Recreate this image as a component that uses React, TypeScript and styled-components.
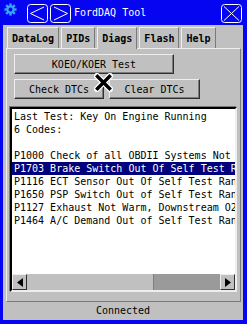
import React from "react";
import styled, { createGlobalStyle } from "styled-components";

const GlobalStyle = createGlobalStyle`
html, body {
    margin: 0;
    padding: 0;
    background: #ffffff;
}
body {
    font-family: "DejaVu Sans Mono", "Liberation Mono", monospace;
}
`;

const BG = "#c0c0c0";
const LIGHT = "#eeeeee";
const DARK = "#7a7a7a";
const TITLE_BLUE = "#0505f2";

const codes: string[] = [
    "Last Test: Key On Engine Running",
    "6 Codes:",
    "",
    "P1000 Check of all OBDII Systems Not Complete",
    "P1703 Brake Switch Out Of Self Test Range",
    "P1116 ECT Sensor Out Of Self Test Range",
    "P1650 PSP Switch Out of Self Test Range",
    "P1127 Exhaust Not Warm, Downstream O2 Sensor Not Tested",
    "P1464 A/C Demand Out of Self Test Range",
];

const tabs = ["DataLog", "PIDs", "Diags", "Flash", "Help"];

const Gear = () => (
    <svg width="13" height="13" viewBox="0 0 13 13">
        <g stroke="#3aa2ff" strokeWidth="2.4" strokeLinecap="butt">
            {[0, 45, 90, 135].map((a) => (
                <line key={a} x1="6.5" y1="0.4" x2="6.5" y2="12.6" transform={`rotate(${a} 6.5 6.5)`} />
            ))}
        </g>
        <circle cx="6.5" cy="6.5" r="4.2" fill="#3aa2ff" />
        <circle cx="6.5" cy="6.5" r="1.9" fill={TITLE_BLUE} />
    </svg>
);

const Chevron = ({ dir }: { dir: "left" | "right" }) => (
    <svg width="21" height="19" viewBox="0 0 21 19">
        <rect x="0.5" y="0.5" width="20" height="18" rx="3" fill="none" stroke="#ffffff" strokeWidth="1" />
        {dir === "left" ? (
            <polyline points="17,3 3.5,9.5 17,16" fill="none" stroke="#ffffff" strokeWidth="1" />
        ) : (
            <polyline points="4,3 17.5,9.5 4,16" fill="none" stroke="#ffffff" strokeWidth="1" />
        )}
    </svg>
);

const CloseIcon = () => (
    <svg width="21" height="19" viewBox="0 0 21 19">
        <rect x="0.5" y="0.5" width="20" height="18" rx="3" fill="none" stroke="#ffffff" strokeWidth="1" />
        <line x1="3" y1="2.5" x2="18" y2="16.5" stroke="#ffffff" strokeWidth="1" />
        <line x1="18" y1="2.5" x2="3" y2="16.5" stroke="#ffffff" strokeWidth="1" />
    </svg>
);

const Triangle = ({ dir }: { dir: "left" | "right" }) => (
    <svg width="6" height="9" viewBox="0 0 6 9">
        {dir === "left" ? <polygon points="6,0 0,4.5 6,9" fill="#000" /> : <polygon points="0,0 6,4.5 0,9" fill="#000" />}
    </svg>
);

const XCursor = () => (
    <svg width="19" height="19" viewBox="0 0 19 19">
        <g strokeLinecap="square">
            <line x1="3" y1="3" x2="16" y2="16" stroke="#ffffff" strokeWidth="6" />
            <line x1="16" y1="3" x2="3" y2="16" stroke="#ffffff" strokeWidth="6" />
            <line x1="3.5" y1="3.5" x2="15.5" y2="15.5" stroke="#000000" strokeWidth="3.4" />
            <line x1="15.5" y1="3.5" x2="3.5" y2="15.5" stroke="#000000" strokeWidth="3.4" />
        </g>
    </svg>
);

export default function App(): JSX.Element {
    const visibleChars = 37;
    const longest = Math.max(...codes.map((c) => c.length));
    const thumbPct = Math.min(100, (visibleChars / longest) * 100 * 0.98);

    return (
        <>
            <GlobalStyle />
            <Window>
                <TitleBar>
                    <GearSlot>
                        <Gear />
                    </GearSlot>
                    <TitleButton>
                        <Chevron dir="left" />
                    </TitleButton>
                    <TitleButton>
                        <Chevron dir="right" />
                    </TitleButton>
                    <TitleText>FordDAQ Tool</TitleText>
                    <CloseButton>
                        <CloseIcon />
                    </CloseButton>
                </TitleBar>
                <Body>
                    <TabRow>
                        {tabs.map((t) => (
                            <Tab key={t} $active={t === "Diags"}>
                                {t}
                            </Tab>
                        ))}
                    </TabRow>
                    <Panel>
                        <Buttons>
                            <RaisedButton $width={160}>KOEO/KOER Test</RaisedButton>
                            <ButtonRow>
                                <RaisedButton $width={90}>Check DTCs</RaisedButton>
                                <RaisedButton $width={91}>Clear DTCs</RaisedButton>
                            </ButtonRow>
                        </Buttons>
                        <ListBox>
                            <Lines>
                                {codes.map((c, i) => (
                                    <Line key={i} $selected={i === 4}>
                                        {c}
                                    </Line>
                                ))}
                            </Lines>
                            <HScroll>
                                <ArrowButton>
                                    <Triangle dir="left" />
                                </ArrowButton>
                                <Trough>
                                    <Thumb style={{ width: `${thumbPct}%` }} />
                                </Trough>
                                <ArrowButton>
                                    <Triangle dir="right" />
                                </ArrowButton>
                            </HScroll>
                        </ListBox>
                    </Panel>
                    <Status>Connected</Status>
                </Body>
                <Cursor>
                    <XCursor />
                </Cursor>
            </Window>
        </>
    );
}

const Window = styled.div`
position: relative;
width: 247px;
height: 324px;
box-sizing: border-box;
padding: 0 4px 4px 3px;
background: ${TITLE_BLUE};
display: flex;
flex-direction: column;
overflow: hidden;
`;

const TitleBar = styled.div`
height: 25px;
display: flex;
align-items: flex-start;
color: #ffffff;
`;

const GearSlot = styled.div`
margin: 3px 8px 0 1px;
width: 13px;
height: 13px;
display: flex;
`;

const TitleButton = styled.div`
margin-top: 4px;
margin-left: 2px;
width: 21px;
height: 19px;
display: flex;
`;

const TitleText = styled.div`
margin: 6px 0 0 3px;
font-size: 10px;
line-height: 13px;
flex: 1;
white-space: nowrap;
`;

const CloseButton = styled.div`
margin: 4px 1px 0 0;
width: 21px;
height: 19px;
display: flex;
`;

const Body = styled.div`
flex: 1;
background: ${BG};
display: flex;
flex-direction: column;
`;

const TabRow = styled.div`
height: 21px;
margin-top: 2px;
padding-left: 4px;
display: flex;
align-items: flex-end;
gap: 2px;
position: relative;
z-index: 1;
`;

const Tab = styled.div<{ $active?: boolean }>`
height: ${(p) => (p.$active ? "22px" : "21px")};
margin-bottom: ${(p) => (p.$active ? "-1px" : "0")};
box-sizing: border-box;
padding: 4px 4px 0 4px;
border-top: 1px solid ${LIGHT};
border-left: 1px solid ${LIGHT};
border-right: 1px solid ${DARK};
background: ${BG};
font-weight: bold;
font-size: 10px;
line-height: 13px;
color: #000;
white-space: nowrap;
`;

const Panel = styled.div`
margin: 0 2px 0 3px;
height: 254px;
box-sizing: border-box;
border: 1px solid;
border-color: ${LIGHT} ${DARK} ${DARK} ${LIGHT};
padding: 5px 3px 0 3px;
display: flex;
flex-direction: column;
`;

const Buttons = styled.div`
padding-left: 4px;
display: flex;
flex-direction: column;
gap: 5px;
`;

const ButtonRow = styled.div`
display: flex;
gap: 5px;
`;

const RaisedButton = styled.div<{ $width: number }>`
width: ${(p) => p.$width}px;
height: 20px;
box-sizing: border-box;
border: 1px solid;
border-color: ${LIGHT} #303030 #303030 ${LIGHT};
box-shadow: inset -1px -1px 0 ${DARK};
display: flex;
align-items: center;
justify-content: center;
font-size: 10px;
color: #000;
white-space: nowrap;
`;

const ListBox = styled.div`
margin-top: 8px;
width: 227px;
height: 185px;
box-sizing: border-box;
border: 2px solid;
border-color: #000000 ${LIGHT} ${LIGHT} #000000;
box-shadow: -1px -1px 0 ${DARK};
display: flex;
flex-direction: column;
background: #ffffff;
`;

const Lines = styled.div`
flex: 1;
overflow: hidden;
padding-top: 1px;
`;

const Line = styled.div<{ $selected?: boolean }>`
height: 13px;
line-height: 13px;
padding-left: 2px;
font-size: 10px;
white-space: pre;
color: ${(p) => (p.$selected ? "#ffffff" : "#000000")};
background: ${(p) => (p.$selected ? "#00007c" : "transparent")};
`;

const HScroll = styled.div`
height: 16px;
display: flex;
background: #9a9a9a;
`;

const ArrowButton = styled.div`
width: 15px;
height: 16px;
box-sizing: border-box;
border: 1px solid;
border-color: ${LIGHT} #303030 #303030 ${LIGHT};
background: ${BG};
display: flex;
align-items: center;
justify-content: center;
`;

const Trough = styled.div`
flex: 1;
display: flex;
`;

const Thumb = styled.div`
height: 100%;
box-sizing: border-box;
background: ${BG};
border-right: 1px solid #808080;
`;

const Status = styled.div`
flex: 1;
display: flex;
align-items: center;
justify-content: center;
font-size: 10px;
color: #000;
padding-bottom: 1px;
`;

const Cursor = styled.div`
position: absolute;
left: 94px;
top: 73px;
width: 19px;
height: 19px;
pointer-events: none;
`;
